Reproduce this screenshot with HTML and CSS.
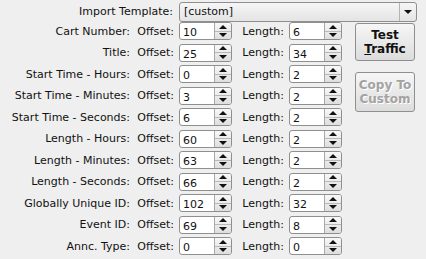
FILE: index.html
```html
<!DOCTYPE html>
<html lang="en">
<head>
    <meta charset="UTF-8">
    <title>Import Template</title>
    <link rel="stylesheet" href="styles.css">
</head>
<body>

    <div class="template-row">
        <label class="template-label">Import Template:</label>
        <div class="combo">
            <span class="combo-text">[custom]</span>
            <span class="combo-arrow"><i class="tri-down"></i></span>
        </div>
    </div>

    <div class="main">
        <div class="fields">
            <span class="field-name">Cart Number:</span>
            <span class="sub">Offset:</span>
            <div class="spin"><span class="spin-value">10</span><span class="spin-btns"><i class="tri-up"></i><i class="tri-down"></i></span></div>
            <span class="sub">Length:</span>
            <div class="spin"><span class="spin-value">6</span><span class="spin-btns"><i class="tri-up"></i><i class="tri-down"></i></span></div>

            <span class="field-name">Title:</span>
            <span class="sub">Offset:</span>
            <div class="spin"><span class="spin-value">25</span><span class="spin-btns"><i class="tri-up"></i><i class="tri-down"></i></span></div>
            <span class="sub">Length:</span>
            <div class="spin"><span class="spin-value">34</span><span class="spin-btns"><i class="tri-up"></i><i class="tri-down"></i></span></div>

            <span class="field-name">Start Time - Hours:</span>
            <span class="sub">Offset:</span>
            <div class="spin"><span class="spin-value">0</span><span class="spin-btns"><i class="tri-up"></i><i class="tri-down"></i></span></div>
            <span class="sub">Length:</span>
            <div class="spin"><span class="spin-value">2</span><span class="spin-btns"><i class="tri-up"></i><i class="tri-down"></i></span></div>

            <span class="field-name">Start Time - Minutes:</span>
            <span class="sub">Offset:</span>
            <div class="spin"><span class="spin-value">3</span><span class="spin-btns"><i class="tri-up"></i><i class="tri-down"></i></span></div>
            <span class="sub">Length:</span>
            <div class="spin"><span class="spin-value">2</span><span class="spin-btns"><i class="tri-up"></i><i class="tri-down"></i></span></div>

            <span class="field-name">Start Time - Seconds:</span>
            <span class="sub">Offset:</span>
            <div class="spin"><span class="spin-value">6</span><span class="spin-btns"><i class="tri-up"></i><i class="tri-down"></i></span></div>
            <span class="sub">Length:</span>
            <div class="spin"><span class="spin-value">2</span><span class="spin-btns"><i class="tri-up"></i><i class="tri-down"></i></span></div>

            <span class="field-name">Length - Hours:</span>
            <span class="sub">Offset:</span>
            <div class="spin"><span class="spin-value">60</span><span class="spin-btns"><i class="tri-up"></i><i class="tri-down"></i></span></div>
            <span class="sub">Length:</span>
            <div class="spin"><span class="spin-value">2</span><span class="spin-btns"><i class="tri-up"></i><i class="tri-down"></i></span></div>

            <span class="field-name">Length - Minutes:</span>
            <span class="sub">Offset:</span>
            <div class="spin"><span class="spin-value">63</span><span class="spin-btns"><i class="tri-up"></i><i class="tri-down"></i></span></div>
            <span class="sub">Length:</span>
            <div class="spin"><span class="spin-value">2</span><span class="spin-btns"><i class="tri-up"></i><i class="tri-down"></i></span></div>

            <span class="field-name">Length - Seconds:</span>
            <span class="sub">Offset:</span>
            <div class="spin"><span class="spin-value">66</span><span class="spin-btns"><i class="tri-up"></i><i class="tri-down"></i></span></div>
            <span class="sub">Length:</span>
            <div class="spin"><span class="spin-value">2</span><span class="spin-btns"><i class="tri-up"></i><i class="tri-down"></i></span></div>

            <span class="field-name">Globally Unique ID:</span>
            <span class="sub">Offset:</span>
            <div class="spin"><span class="spin-value">102</span><span class="spin-btns"><i class="tri-up"></i><i class="tri-down"></i></span></div>
            <span class="sub">Length:</span>
            <div class="spin"><span class="spin-value">32</span><span class="spin-btns"><i class="tri-up"></i><i class="tri-down"></i></span></div>

            <span class="field-name">Event ID:</span>
            <span class="sub">Offset:</span>
            <div class="spin"><span class="spin-value">69</span><span class="spin-btns"><i class="tri-up"></i><i class="tri-down"></i></span></div>
            <span class="sub">Length:</span>
            <div class="spin"><span class="spin-value">8</span><span class="spin-btns"><i class="tri-up"></i><i class="tri-down"></i></span></div>

            <span class="field-name">Annc. Type:</span>
            <span class="sub">Offset:</span>
            <div class="spin"><span class="spin-value">0</span><span class="spin-btns"><i class="tri-up"></i><i class="tri-down"></i></span></div>
            <span class="sub">Length:</span>
            <div class="spin"><span class="spin-value">0</span><span class="spin-btns"><i class="tri-up"></i><i class="tri-down"></i></span></div>
        </div>

        <div class="actions">
            <button class="btn test-btn">Test<br><u>T</u>raffic</button>
            <button class="btn copy-btn" disabled>Copy To<br>Custom</button>
        </div>
    </div>

</body>
</html>
```

FILE: styles.css
```css
/* General styles */
body {
    margin: 0;
    background-color: #efefef;
    color: #111;
    font-family: 'DejaVu Sans', sans-serif;
    font-size: 11px;
}

/* Import template row */
.template-row {
    display: flex;
    align-items: center;
    padding-top: 1px;
    height: 21px;
}

.template-label {
    width: 173px;
    text-align: right;
    margin-right: 6px;
}

.combo {
    width: 236px;
    height: 18px;
    display: flex;
    align-items: center;
    border: 1px solid #8f8f8f;
    border-radius: 3px;
    background: linear-gradient(#f6f6f6, #e4e4e4);
}

.combo-text {
    flex: 1;
    padding-left: 4px;
}

.combo-arrow {
    width: 16px;
    height: 18px;
    display: flex;
    align-items: center;
    justify-content: center;
    border-left: 1px solid #b4b4b4;
}

/* Offset / length grid */
.main {
    display: flex;
}

.fields {
    display: grid;
    grid-template-columns: 136px 43px 53px 57px 53px;
    grid-auto-rows: 18px;
    row-gap: 3.5px;
    align-items: center;
}

.field-name,
.sub {
    text-align: right;
    padding-right: 5px;
    white-space: nowrap;
}

.field-name {
    padding-right: 6px;
}

.spin {
    height: 18px;
    box-sizing: border-box;
    display: flex;
    border: 1px solid #8f8f8f;
    border-radius: 3px;
    background: #fff;
    overflow: hidden;
}

.spin-value {
    flex: 1;
    padding-left: 3px;
    line-height: 17px;
    padding-top: 1px;
}

.spin-btns {
    width: 16px;
    display: flex;
    flex-direction: column;
    border-left: 1px solid #a8a8a8;
    background: linear-gradient(#f8f8f8, #dedede);
}

.spin-btns i {
    flex: 1;
}

.spin-btns i:first-child {
    border-bottom: 1px solid #b8b8b8;
}

.tri-up,
.tri-down {
    display: flex;
    align-items: center;
    justify-content: center;
}

.tri-up::before,
.tri-down::before {
    content: "";
    border-left: 4px solid transparent;
    border-right: 4px solid transparent;
}

.tri-up::before {
    border-bottom: 4px solid #111;
}

.tri-down::before {
    border-top: 4px solid #111;
}

/* Side buttons */
.actions {
    display: flex;
    flex-direction: column;
    gap: 11px;
    margin-left: 13px;
    padding-top: 1px;
}

.btn {
    width: 60px;
    border: 1px solid #8f8f8f;
    border-radius: 3px;
    background: linear-gradient(#f6f6f6, #dcdcdc);
    font-family: 'DejaVu Sans', sans-serif;
    font-size: 12px;
    font-weight: bold;
    line-height: 14px;
    padding: 0;
}

.test-btn {
    height: 38px;
    color: #111;
}

.copy-btn {
    height: 40px;
    color: #a3a3a3;
    text-shadow: 1px 1px 0 #fff;
}
```
